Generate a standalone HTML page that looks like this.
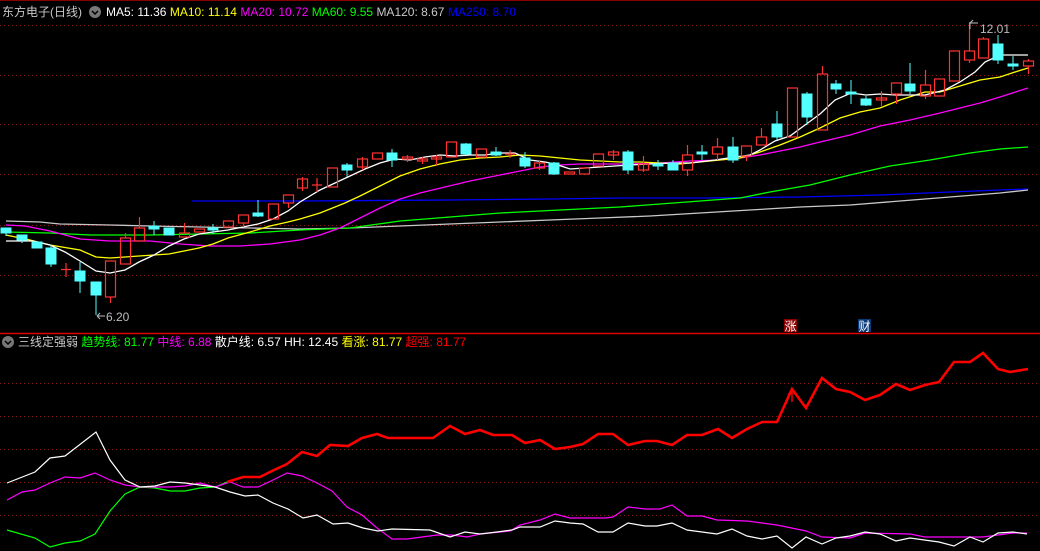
<!DOCTYPE html>
<html><head><meta charset="utf-8"><style>
html,body{margin:0;padding:0;background:#000;width:1040px;height:551px;overflow:hidden}
svg{display:block}
text{font-family:"Liberation Sans","Noto Sans CJK SC",sans-serif;font-size:12px}
</style></head><body>
<svg width="1040" height="551" viewBox="0 0 1040 551" xmlns="http://www.w3.org/2000/svg">
<rect width="1040" height="551" fill="#000"/>
<line x1="0" y1="0.5" x2="1040" y2="0.5" stroke="#800" stroke-width="1"/>
<g stroke="#8a1515" stroke-width="1" stroke-dasharray="1,3">
<line x1="0" y1="25.5" x2="1040" y2="25.5"/><line x1="0" y1="75.5" x2="1040" y2="75.5"/>
<line x1="0" y1="124.5" x2="1040" y2="124.5"/><line x1="0" y1="174.5" x2="1040" y2="174.5"/>
<line x1="0" y1="225.5" x2="1040" y2="225.5"/><line x1="0" y1="275.5" x2="1040" y2="275.5"/>
<line x1="0" y1="383.5" x2="1040" y2="383.5"/><line x1="0" y1="416.5" x2="1040" y2="416.5"/>
<line x1="0" y1="449.5" x2="1040" y2="449.5"/><line x1="0" y1="482.5" x2="1040" y2="482.5"/>
<line x1="0" y1="515.5" x2="1040" y2="515.5"/>
</g>
<line x1="0" y1="333.5" x2="1040" y2="333.5" stroke="#d00" stroke-width="1.5"/>

<!-- MA lines -->
<g fill="none" stroke-width="1.3">
<polyline stroke="#0000ff" points="192,201 300,201 450,200 550,199 620,198 700,198 800,197 880,195 950,192 1000,190 1028,189"/>
<polyline stroke="#c8c8c8" points="6,221 40,222 60,224 110,225 150,226 200,227 250,228 300,229 350,228 400,226 450,224 500,222 550,220 600,218 650,216 700,213 750,210 800,207 850,205 900,201 950,197 1000,193 1028,190"/>
<polyline stroke="#00ff00" points="6,232 50,233 90,235 150,235 200,234 250,233 300,230 350,228 400,221 450,217 500,213 540,211 580,209 620,207 660,204 700,201 740,198 770,192 810,185 850,175 890,166 930,160 970,153 1000,149 1028,147"/>
<polyline stroke="#ff00ff" points="6,225 25,226 50,231 80,239 110,241 150,241 180,244 210,246 240,246 270,244 300,240 320,235 340,228 360,218 380,208 400,199 420,193 445,187 470,181 500,175 520,171 540,167 560,165 580,164 600,164 630,164 660,163 690,161 720,160 740,158 760,155 780,151 800,147 820,142 850,135 880,126 910,120 940,113 960,108 980,103 1000,97 1028,88"/>
<polyline stroke="#ffff00" points="6,235 30,240 50,245 80,250 96,257 110,258 125,257 139,256 154,255 169,254 184,251 199,248 213,244 228,238 250,232 270,226 288,222 300,219 320,213 345,203 360,196 380,186 400,176 420,169 440,164 460,160 480,158 500,157 520,155 540,156 560,158 580,160 600,161 620,162 640,162 660,163 680,164 700,162 720,160 740,158 760,152 780,145 800,137 820,128 840,118 860,112 880,108 900,100 925,92 940,92 960,86 980,80 1000,77 1015,72 1028,68"/>
<polyline stroke="#ffffff" points="6,241 33,241 50,245 65,252 80,261 96,271 110,273 125,270 139,262 154,255 169,246 184,239 199,234 213,232 228,230 243,227 258,224 273,219 288,211 300,202 320,190 335,183 350,176 365,169 380,163 395,159 410,160 425,157 440,155 455,156 470,155 485,155 500,153 515,153 530,160 545,162 555,164 570,169 585,168 600,167 615,166 630,165 650,164 670,163 690,163 715,160 735,157 750,155 760,150 775,141 790,136 805,125 820,114 835,100 851,93 866,95 880,94 896,95 925,95 945,90 960,82 975,72 985,62 1000,55 1013,55 1028,55"/>
</g>

<!-- candles: red hollow -->
<g fill="none" stroke="#ff3232" stroke-width="1.2">
<path d="M66,263V277M61,269.5H71"/>
<rect x="105.5" y="261" width="10" height="36"/><path d="M110.5,297V303"/>
<rect x="120.5" y="238" width="10" height="26"/><path d="M125.5,233V238"/>
<rect x="134.5" y="228" width="10" height="13"/><path d="M139.5,217V228"/>
<rect x="179.5" y="233" width="10" height="4"/><path d="M184.5,223V233"/>
<rect x="194.5" y="229" width="10" height="3"/>
<rect x="223.5" y="221" width="10" height="6"/>
<rect x="238.5" y="215" width="10" height="8"/><path d="M243.5,223V227"/>
<rect x="268.5" y="204" width="10" height="15"/>
<rect x="283.5" y="195" width="10" height="8"/><path d="M288.5,203V208"/>
<rect x="297.5" y="179" width="10" height="9"/><path d="M302.5,177V191"/>
<path d="M317,178V192M312,185H322"/>
<rect x="327.5" y="168" width="10" height="19"/>
<rect x="357.5" y="159" width="10" height="8"/><path d="M362.5,157V170"/>
<rect x="372.5" y="153" width="10" height="6"/>
<rect x="402.5" y="157" width="10" height="2"/><path d="M407.5,155V162"/>
<rect x="417.5" y="159" width="10" height="2"/><path d="M422.5,157V164"/>
<rect x="431.5" y="157" width="10" height="2"/><path d="M436.5,155V165"/>
<rect x="446.5" y="142" width="10" height="15"/>
<rect x="476.5" y="149" width="10" height="8"/>
<path d="M510,150V158M505,154H515"/>
<rect x="534.5" y="163" width="10" height="5"/><path d="M539.5,160V170"/>
<rect x="564.5" y="172" width="10" height="2"/>
<rect x="579.5" y="168" width="10" height="6"/>
<rect x="593.5" y="154" width="10" height="12"/>
<rect x="608.5" y="152" width="10" height="3"/><path d="M613.5,150V160"/>
<rect x="638.5" y="164" width="10" height="6"/><path d="M643.5,156V172"/>
<rect x="682.5" y="155" width="10" height="15"/><path d="M687.5,145V155M687.5,170V176"/>
<rect x="712.5" y="147" width="10" height="7"/><path d="M717.5,138V147M717.5,154V160"/>
<rect x="741.5" y="146" width="10" height="10"/><path d="M746.5,156V161"/>
<rect x="756.5" y="137" width="10" height="8"/><path d="M761.5,128V137"/>
<rect x="787.5" y="88" width="10" height="49"/>
<rect x="817.5" y="74" width="10" height="56"/><path d="M822.5,66V74"/>
<rect x="876.5" y="98" width="10" height="2"/><path d="M881.5,91V106"/>
<rect x="891.5" y="83" width="10" height="11"/><path d="M896.5,94V104"/>
<rect x="920.5" y="85" width="10" height="11"/><path d="M925.5,70V85M925.5,96V99"/>
<rect x="934.5" y="79" width="10" height="17"/>
<rect x="949.5" y="51" width="10" height="30"/>
<rect x="964.5" y="51" width="10" height="9"/><path d="M969.5,22V51M969.5,60V63"/>
<rect x="978.5" y="39" width="10" height="19"/><path d="M983.5,37V39"/>
<rect x="1023.5" y="61" width="10" height="5"/><path d="M1028.5,59V61M1028.5,66V74"/>
</g>
<!-- cyan filled -->
<g fill="#54ffff" stroke="#54ffff" stroke-width="1">
<path d="M6,228V236M22,235V243M37,242V248M51,245V267M80,262V293M96,282V315M154,221V235M169,228V235M213,224V234M258,200V217M347,163V177M392,149V167M466,143V154M496,147V156M525,152V168M554,162V175M628,150V174M658,160V170M673,160V170M702,145V160M733,137V163M777,111V140M807,92V125M836,80V94M851,80V104M866,96V106M910,63V94M998,35V64M1013,56V70" fill="none"/>
<rect x="1" y="228" width="10" height="5"/>
<rect x="17" y="235" width="10" height="5"/>
<rect x="32" y="242" width="10" height="6"/>
<rect x="46" y="248" width="10" height="16"/>
<rect x="75" y="271" width="10" height="10"/>
<rect x="91" y="282" width="10" height="13"/>
<rect x="149" y="226" width="10" height="3"/>
<rect x="164" y="228" width="10" height="7"/>
<rect x="208" y="228" width="10" height="2"/>
<rect x="253" y="213" width="10" height="3"/>
<rect x="342" y="165" width="10" height="5"/>
<rect x="387" y="153" width="10" height="7"/>
<rect x="461" y="144" width="10" height="10"/>
<rect x="491" y="152" width="10" height="3"/>
<rect x="520" y="158" width="10" height="8"/>
<rect x="549" y="163" width="10" height="11"/>
<rect x="623" y="152" width="10" height="18"/>
<rect x="653" y="164" width="10" height="2"/>
<rect x="668" y="163" width="10" height="7"/>
<rect x="697" y="152" width="10" height="2"/>
<rect x="728" y="147" width="10" height="13"/>
<rect x="772" y="124" width="10" height="13"/>
<rect x="802" y="94" width="10" height="23"/>
<rect x="831" y="84" width="10" height="5"/>
<rect x="846" y="92" width="10" height="2"/>
<rect x="861" y="99" width="10" height="6"/>
<rect x="905" y="84" width="10" height="7"/>
<rect x="993" y="44" width="10" height="16"/>
<rect x="1008" y="64" width="10" height="2"/>
</g>

<!-- high/low markers -->
<g stroke="#bbb" fill="none" stroke-width="1">
<path d="M97,316H105M97,316l3,-3M97,316l3,3"/>
<path d="M970,23H978M970,23l3,-3M970,23V29"/>
</g>
<text x="106" y="321" fill="#bbb">6.20</text>
<text x="980" y="33" fill="#bbb">12.01</text>

<!-- 涨 财 -->
<rect x="784" y="319" width="13" height="13" fill="#8b0000"/>
<text x="784.5" y="330.5" fill="#fff" font-size="12">涨</text>
<rect x="858" y="319" width="13" height="13" fill="#0a3a7a"/>
<text x="858.5" y="330.5" fill="#fff" font-size="12">财</text>

<!-- header -->
<text x="2" y="16" fill="#c8c8c8">东方电子(日线)</text>
<circle cx="95" cy="12" r="6" fill="#777"/><path d="M92,11l3,3l3,-3" stroke="#000" stroke-width="1.5" fill="none"/>
<text x="106" y="16"><tspan fill="#fff">MA5: 11.36 </tspan><tspan fill="#ffff00">MA10: 11.14 </tspan><tspan fill="#ff00ff">MA20: 10.72 </tspan><tspan fill="#00ff00">MA60: 9.55 </tspan><tspan fill="#c8c8c8">MA120: 8.67 </tspan><tspan fill="#0000ff">MA250: 8.70</tspan></text>

<circle cx="8" cy="342" r="6" fill="#777"/><path d="M5,341l3,3l3,-3" stroke="#000" stroke-width="1.5" fill="none"/>
<text x="18" y="346"><tspan fill="#c8c8c8">三线定强弱 </tspan><tspan fill="#00ff00">趋势线: 81.77 </tspan><tspan fill="#ff00ff">中线: 6.88 </tspan><tspan fill="#fff">散户线: 6.57 HH: 12.45 </tspan><tspan fill="#ffff00">看涨: 81.77 </tspan><tspan fill="#ff0000">超强: 81.77</tspan></text>

<!-- bottom indicator -->
<g fill="none" stroke-width="1.2">
<polyline stroke="#00ff00" points="7,530 35,538 50,547 65,543 80,541 95,534 110,511 125,494 140,487 155,488 170,491 185,491 200,488 215,487 227,482"/>
<polyline stroke="#ff00ff" points="7,500 22,492 35,490 50,483 65,477 80,478 95,473 110,480 125,485 140,487 170,487 185,486 200,483 215,487 230,482 243,487 258,487 273,480 287,473 302,476 317,483 332,491 347,507 362,515 377,528 392,539 407,539 422,537 437,535 452,535 467,537 480,534 510,531 520,525 540,520 555,514 570,518 605,518 613,517 628,507 645,509 660,509 672,505 687,516 702,516 717,520 747,521 777,525 806,531 822,537 850,538 865,533 910,534 925,537 983,537 1013,533 1027,533"/>
<polyline stroke="#ffffff" points="7,483 35,472 50,458 65,456 96,432 110,460 125,480 140,487 155,486 170,482 185,483 200,485 215,487 230,492 245,496 258,495 273,503 288,509 303,518 317,515 333,524 348,523 363,528 378,531 392,529 430,530 450,537 465,532 480,534 497,532 512,530 520,527 540,527 555,521 570,523 583,524 598,532 613,532 628,523 645,526 657,526 672,523 687,530 702,532 717,534 732,529 747,536 762,539 777,536 792,548 806,537 822,544 836,538 850,536 865,532 880,534 896,541 910,538 939,542 954,546 970,537 983,542 998,533 1013,532 1027,534"/>
<polyline stroke="#ff0000" stroke-width="2.6" points="227,482 243,477 260,477 272,471 287,464 302,452 317,456 330,445 348,446 362,438 377,434 388,438 433,438 450,426 465,434 480,430 493,435 512,435 520,440 525,443 540,440 555,449 570,447 583,444 598,434 613,434 628,445 645,441 657,441 672,445 687,435 702,435 718,429 732,438 747,429 762,422 777,422 792,389 806,408 822,378 836,389 850,392 865,400 880,395 896,384 910,390 925,385 939,382 954,362 970,362 983,353 998,369 1010,372 1028,369"/>
<path d="M792,390V402M788,395l4,-5l4,5" stroke="#ff0000" stroke-width="1.5"/>
</g>
</svg>
</body></html>
